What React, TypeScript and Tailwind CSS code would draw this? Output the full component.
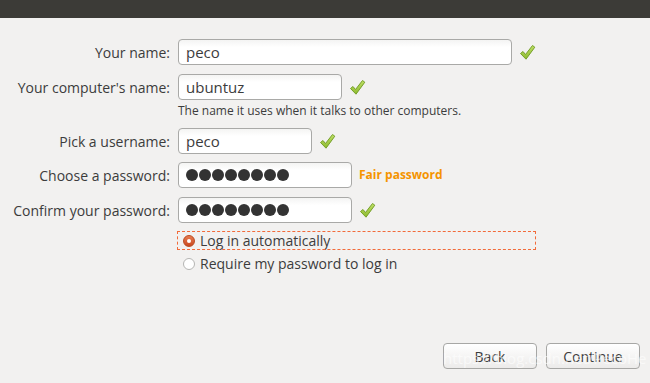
import type { ReactNode } from 'react'

const FONT = { fontFamily: '"Open Sans", "DejaVu Sans", sans-serif' }

function Check() {
  return (
    <svg width="17" height="17" viewBox="0 0 17 17" className="shrink-0">
      <defs>
        <linearGradient id="ck" x1="0" y1="0" x2="0" y2="1">
          <stop offset="0" stopColor="#bfe066" />
          <stop offset="1" stopColor="#8dba2e" />
        </linearGradient>
      </defs>
      <path
        d="M1.5 9.5 L4 7.5 L6.5 10.5 L13.5 1.5 L15.8 3.2 L7 15.2 Z"
        fill="url(#ck)"
        stroke="#76a02a"
        strokeWidth="1"
        strokeLinejoin="round"
      />
    </svg>
  )
}

function Field({ width, children }: { width: string; children: ReactNode }) {
  return (
    <div
      className={
        'h-[26px] rounded-[4px] border border-[#a9a9a7] bg-gradient-to-b from-[#f4f4f3] to-white to-[30%] px-[7px] flex items-center text-[15px] text-[#3c3c3c] ' +
        width
      }
    >
      {children}
    </div>
  )
}

function Dots() {
  return (
    <div className="flex gap-[1px]">
      {Array.from({ length: 8 }).map((_, i) => (
        <span key={i} className="w-[12px] h-[12px] rounded-full bg-[#333333]" />
      ))}
    </div>
  )
}

function Row({ label, children }: { label: string; children: ReactNode }) {
  return (
    <div className="flex items-center">
      <div className="w-[171px] pr-[1px] text-right text-[14px] text-[#3c3c3c] whitespace-nowrap">{label}</div>
      <div className="ml-[7px] flex items-center gap-[7px]">{children}</div>
    </div>
  )
}

export default function App() {
  return (
    <div className="w-[650px] h-[383px] bg-[#f2f1f0] flex flex-col relative overflow-hidden" style={FONT}>
      <div className="h-[18px] bg-[#3c3b37]" />

      <div className="flex flex-col pt-[21px]">
        <Row label="Your name:">
          <Field width="w-[334px]">peco</Field>
          <Check />
        </Row>

        <div className="mt-[9px]">
          <Row label="Your computer's name:">
            <Field width="w-[164px]">ubuntuz</Field>
            <Check />
          </Row>
        </div>
        <p className="ml-[178px] mt-[3px] text-[12px] leading-[16px] text-[#3c3c3c]">
          The name it uses when it talks to other computers.
        </p>

        <div className="mt-[9px]">
          <Row label="Pick a username:">
            <Field width="w-[134px]">peco</Field>
            <Check />
          </Row>
        </div>

        <div className="mt-[8px]">
          <Row label="Choose a password:">
            <Field width="w-[174px]">
              <Dots />
            </Field>
            <span className="text-[12px] font-bold text-[#f59400]">Fair password</span>
          </Row>
        </div>

        <div className="mt-[9px]">
          <Row label="Confirm your password:">
            <Field width="w-[174px]">
              <Dots />
            </Field>
            <Check />
          </Row>
        </div>

        {/* focused radio with dotted focus ring */}
        <div className="ml-[177px] mt-[8px] w-[359px] h-[19px] outline outline-1 outline-dashed outline-[#f26b3a] -outline-offset-1 flex items-center pl-[6px] gap-[5px] text-[14px] text-[#3c3c3c]">
          <span className="w-[12px] h-[12px] rounded-full bg-gradient-to-b from-[#e87b4f] to-[#c9481f] border border-[#b94a22] flex items-center justify-center">
            <span className="w-[4px] h-[4px] rounded-full bg-white" />
          </span>
          Log in automatically
        </div>

        <div className="ml-[178px] mt-[4px] h-[19px] flex items-center pl-[5px] gap-[5px] text-[14px] text-[#3c3c3c]">
          <span className="w-[12px] h-[12px] rounded-full bg-white border border-[#b5b5b3]" />
          Require my password to log in
        </div>
      </div>

      <div className="mt-auto mb-[14px] mr-[10px] flex justify-end gap-[9px]">
        <button className="w-[94px] h-[26px] rounded-[4px] border border-[#a7a7a5] bg-gradient-to-b from-white to-[#ecebea] text-[14px] text-[#3c3c3c]">
          Back
        </button>
        <button className="w-[94px] h-[26px] rounded-[4px] border border-[#a7a7a5] bg-gradient-to-b from-white to-[#ecebea] text-[14px] text-[#3c3c3c]">
          Continue
        </button>
      </div>

      <div className="absolute left-[443px] top-[347px] text-[15px] text-white/60 pointer-events-none whitespace-nowrap">
        https://blog.csdn.net/PecoHe
      </div>
    </div>
  )
}
